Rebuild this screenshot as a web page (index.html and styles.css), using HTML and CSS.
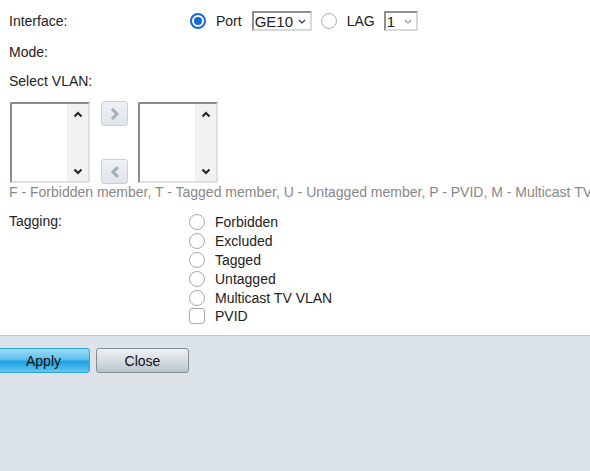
FILE: index.html
```html
<!DOCTYPE html>
<html lang="en">

<head>
	<meta charset="UTF-8">
	<title>Edit VLAN membership</title>
	<link rel="stylesheet" href="styles.css">
</head>

<body>
	<div class="form">
		<div class="row row--first">
			<div class="label">Interface:</div>
			<div class="field">
				<span class="radio radio--checked"></span>
				<span class="opt-text">Port</span>
				<div class="select select--port">GE10
					<svg width="8" height="5" viewBox="0 0 8 5"><path d="M1 1l3 3 3-3" fill="none" stroke="#333" stroke-width="1.2"/></svg>
				</div>
				<span class="radio radio--lag"></span>
				<span class="opt-text">LAG</span>
				<div class="select select--lag">1
					<svg width="8" height="5" viewBox="0 0 8 5"><path d="M1 1l3 3 3-3" fill="none" stroke="#999" stroke-width="1.2"/></svg>
				</div>
			</div>
		</div>
		<div class="row row--mode">
			<div class="label">Mode:</div>
		</div>
		<div class="row row--vlan">
			<div class="label">Select VLAN:</div>
		</div>

		<div class="lists">
			<div class="listbox">
				<div class="listbox-body"></div>
				<div class="scrollbar">
					<svg width="10" height="7" viewBox="0 0 10 7"><path d="M1.5 5.5l3.5-3.5 3.5 3.5" fill="none" stroke="#222" stroke-width="2"/></svg>
					<svg width="10" height="7" viewBox="0 0 10 7"><path d="M1.5 1.5l3.5 3.5 3.5-3.5" fill="none" stroke="#222" stroke-width="2"/></svg>
				</div>
			</div>
			<div class="move-buttons">
				<div class="move-btn">
					<svg width="12" height="14" viewBox="0 0 12 14"><path d="M3 2l5 5-5 5" fill="none" stroke="#a3adb6" stroke-width="3"/></svg>
				</div>
				<div class="move-btn">
					<svg width="12" height="14" viewBox="0 0 12 14"><path d="M9 2l-5 5 5 5" fill="none" stroke="#a3adb6" stroke-width="3"/></svg>
				</div>
			</div>
			<div class="listbox">
				<div class="listbox-body"></div>
				<div class="scrollbar">
					<svg width="10" height="7" viewBox="0 0 10 7"><path d="M1.5 5.5l3.5-3.5 3.5 3.5" fill="none" stroke="#222" stroke-width="2"/></svg>
					<svg width="10" height="7" viewBox="0 0 10 7"><path d="M1.5 1.5l3.5 3.5 3.5-3.5" fill="none" stroke="#222" stroke-width="2"/></svg>
				</div>
			</div>
		</div>

		<div class="legend">F - Forbidden member, T - Tagged member, U - Untagged member, P - PVID, M - Multicast TV VLAN</div>

		<div class="row row--tagging">
			<div class="label">Tagging:</div>
			<div class="options">
				<label class="option"><span class="radio"></span>Forbidden</label>
				<label class="option"><span class="radio"></span>Excluded</label>
				<label class="option"><span class="radio"></span>Tagged</label>
				<label class="option"><span class="radio"></span>Untagged</label>
				<label class="option"><span class="radio"></span>Multicast TV VLAN</label>
				<label class="option"><span class="checkbox"></span>PVID</label>
			</div>
		</div>
	</div>

	<div class="footer">
		<button class="btn btn--apply">Apply</button>
		<button class="btn btn--close">Close</button>
	</div>
</body>

</html>
```

FILE: styles.css
```css
html,
body {
	height: 100%;
}

body {
	margin: 0;
	font-family: 'Liberation Sans', Arial, sans-serif;
	font-size: 14px;
	color: #222;
	overflow: hidden;
	display: flex;
	flex-direction: column;
	background: #fff;
}

.form {
	padding: 6px 0 0 9px;
	height: 335px;
	box-sizing: border-box;
	flex-shrink: 0;
}

.row {
	display: grid;
	grid-template-columns: 180px 1fr;
	align-items: center;
}

.row--first {
	height: 30px;
}

.row--mode {
	height: 31px;
}

.row--vlan {
	height: 27px;
}

.field {
	display: flex;
	align-items: center;
}

.radio {
	width: 14px;
	height: 14px;
	border: 1px solid #a9a9a9;
	border-radius: 50%;
	display: inline-block;
	flex-shrink: 0;
	box-sizing: content-box;
	background: #fff;
}

.radio--checked {
	border: 2px solid #1668dc;
	width: 12px;
	height: 12px;
	position: relative;
	margin-left: 1px;
}

.radio--checked::after {
	content: "";
	position: absolute;
	left: 2px;
	top: 2px;
	width: 8px;
	height: 8px;
	border-radius: 50%;
	background: #1668dc;
}

.opt-text {
	margin-left: 10px;
}

.select {
	height: 20px;
	box-sizing: border-box;
	border: 2px solid;
	border-color: #8f8f8f #d9d9d9 #d9d9d9 #8f8f8f;
	display: flex;
	align-items: center;
	justify-content: space-between;
	padding: 0 4px 0 1px;
	font-size: 15px;
}

.select--port {
	width: 60px;
	margin-left: 10px;
}

.select--lag {
	width: 34px;
	margin-left: 9px;
}

.radio--lag {
	margin-left: 9px;
	border-color: #b0b0b0;
}

.lists {
	display: flex;
	margin: 8px 0 0 1px;
	height: 81px;
}

.listbox {
	width: 80px;
	height: 81px;
	box-sizing: border-box;
	border: 2px solid;
	border-color: #8c8c8c #e0e0e0 #e0e0e0 #8c8c8c;
	display: flex;
}

.listbox-body {
	flex: 1;
	background: #fff;
}

.scrollbar {
	width: 21px;
	background: #f1f1f1;
	display: flex;
	flex-direction: column;
	align-items: center;
	justify-content: space-between;
	padding: 7px 0 6px;
}

.move-buttons {
	display: flex;
	flex-direction: column;
	justify-content: space-between;
	margin: -1px 10px 0 11px;
	height: 83px;
}

.move-btn {
	width: 27px;
	height: 25px;
	box-sizing: border-box;
	border: 1px solid #c9d1d8;
	border-radius: 3px;
	background: linear-gradient(#eef1f4, #dfe5ea);
	display: flex;
	align-items: center;
	justify-content: center;
}

.legend {
	color: #888;
	white-space: nowrap;
	line-height: 16px;
	margin-top: 1px;
}

.row--tagging {
	align-items: start;
	margin-top: 13px;
}

.options {
	display: flex;
	flex-direction: column;
}

.option {
	display: flex;
	align-items: center;
	height: 18.8px;
}

.option .radio,
.option .checkbox {
	margin-right: 10px;
}

.checkbox {
	width: 14px;
	height: 14px;
	border: 1px solid #a9a9a9;
	border-radius: 3px;
	display: inline-block;
}

.footer {
	flex: 1;
	background: #dce3e9;
	border-top: 1px solid #c3cbd2;
	padding: 12px 0 0;
	display: flex;
	align-items: flex-start;
	gap: 6px;
}

.btn {
	font-family: 'Liberation Sans', Arial, sans-serif;
	font-size: 14px;
	color: #111;
	width: 93px;
	height: 25px;
	border-radius: 3px;
	padding: 0;
	cursor: pointer;
}

.btn--apply {
	margin-left: -3px;
	border: 1px solid #2ca3de;
	background: linear-gradient(#9edcf8 0%, #5cc0ee 45%, #1ea3e2 55%, #62c6f1 100%);
}

.btn--close {
	border: 1px solid #868e95;
	background: linear-gradient(#eef1f3 0%, #d6dde3 50%, #b8c4cd 100%);
}
```
